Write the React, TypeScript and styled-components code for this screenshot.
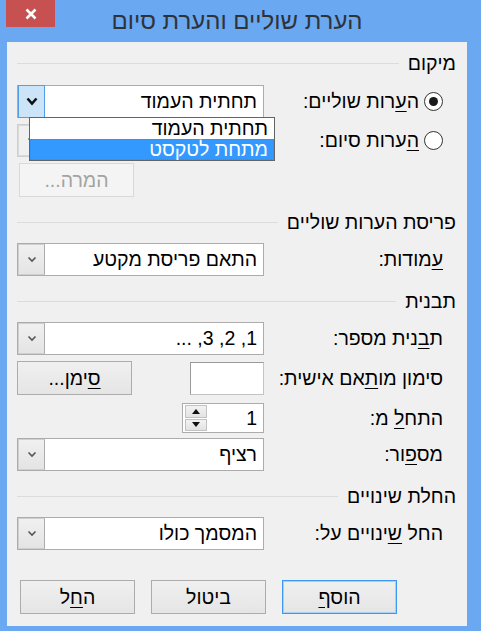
import React from "react";
import styled, { createGlobalStyle } from "styled-components";

const GlobalStyle = createGlobalStyle`
  html, body {
    margin: 0;
    padding: 0;
    background: #6aa8f1;
  }
  body {
    font-family: "Liberation Sans", "DejaVu Sans", sans-serif;
  }
`;

const Window = styled.div`
  width: 481px;
  height: 631px;
  box-sizing: border-box;
  background: #6aa8f1;
  padding: 0 14px 5px 7px;
  display: flex;
  flex-direction: column;
`;

const TitleBar = styled.div`
  height: 42px;
  flex: none;
  display: grid;
  grid-template-columns: 49px 1fr 49px;
`;

const CloseButton = styled.div`
  margin-left: -1px;
  width: 49px;
  height: 27px;
  background: #c75050;
  display: flex;
  align-items: center;
  justify-content: center;
`;

const Title = styled.div`
  direction: rtl;
  text-align: center;
  font-size: 24px;
  line-height: 42px;
  color: #2f3338;
  white-space: nowrap;
`;

const Client = styled.div`
  flex: 1;
  background: #f0f0f0;
  direction: rtl;
  padding: 11px 11px 0 10px;
  display: flex;
  flex-direction: column;
  font-size: 19.5px;
  color: #000;
`;

const SectionHeader = styled.div<{ $mt?: number }>`
  display: flex;
  align-items: center;
  gap: 9px;
  height: 20px;
  margin-top: ${(p) => p.$mt ?? 0}px;
  white-space: nowrap;
  &::after {
    content: "";
    flex: 1;
    height: 1px;
    background: #dcdcdc;
  }
`;

const Row = styled.div<{ $mt: number }>`
  display: flex;
  align-items: center;
  justify-content: space-between;
  margin-top: ${(p) => p.$mt}px;
`;

const Label = styled.div`
  padding-right: 13px;
  display: flex;
  align-items: center;
  gap: 5px;
  white-space: nowrap;
`;

const U = styled.span`
  text-decoration: underline;
  text-underline-offset: 3px;
`;

const RadioCircle = styled.span<{ $checked?: boolean }>`
  width: 19px;
  height: 19px;
  box-sizing: border-box;
  border-radius: 50%;
  border: 1px solid #333;
  background: #fff;
  display: flex;
  align-items: center;
  justify-content: center;
  &::after {
    content: "";
    width: 9px;
    height: 9px;
    border-radius: 50%;
    background: ${(p) => (p.$checked ? "#1a1a1a" : "transparent")};
  }
`;

const Combo = styled.div<{ $disabled?: boolean }>`
  position: relative;
  width: 247px;
  height: 33px;
  box-sizing: border-box;
  border: 1px solid ${(p) => (p.$disabled ? "#cfcfcf" : "#acacac")};
  background: ${(p) => (p.$disabled ? "#f0f0f0" : "#fff")};
  display: flex;
  align-items: center;
`;

const ComboText = styled.div<{ $disabled?: boolean }>`
  flex: 1;
  padding-right: 6px;
  white-space: nowrap;
  color: ${(p) => (p.$disabled ? "#9a9a9a" : "#000")};
`;

const ComboButton = styled.div<{ $open?: boolean; $disabled?: boolean }>`
  width: 27px;
  align-self: stretch;
  box-sizing: border-box;
  display: flex;
  align-items: center;
  justify-content: center;
  background: ${(p) =>
    p.$open ? "#cce4f7" : p.$disabled ? "#f0f0f0" : "linear-gradient(#f0f0f0, #e4e4e4)"};
  border: 1px solid ${(p) => (p.$open ? "#569de5" : p.$disabled ? "#d9d9d9" : "#cfcfcf")};
  margin: ${(p) => (p.$open ? "-1px -1px -1px 0" : "0")};
  border-right-color: ${(p) => (p.$open ? "#569de5" : p.$disabled ? "#d9d9d9" : "#acacac")};
`;

const Popup = styled.div`
  position: absolute;
  top: 100%;
  left: 11px;
  width: 246px;
  box-sizing: border-box;
  border: 1px solid #646464;
  background: #fff;
  z-index: 5;
`;

const PopupItem = styled.div<{ $selected?: boolean }>`
  height: 21px;
  line-height: 19px;
  box-sizing: border-box;
  padding-right: 5px;
  white-space: nowrap;
  background: ${(p) => (p.$selected ? "#3399ff" : "#fff")};
  color: ${(p) => (p.$selected ? "#fff" : "#000")};
  border: 1px dotted ${(p) => (p.$selected ? "#c46a1e" : "transparent")};
`;

const Button = styled.div<{ $disabled?: boolean; $default?: boolean }>`
  width: 115px;
  height: 34px;
  box-sizing: border-box;
  display: flex;
  align-items: center;
  justify-content: center;
  background: ${(p) => (p.$disabled ? "#f4f4f4" : "linear-gradient(#f0f0f0, #e5e5e5)")};
  border: 1px solid
    ${(p) => (p.$disabled ? "#d9d9d9" : p.$default ? "#3c99f1" : "#acacac")};
  box-shadow: ${(p) => (p.$default ? "inset 0 0 0 1px #a9d1f7" : "none")};
  color: ${(p) => (p.$disabled ? "#a3a3a3" : "#000")};
  white-space: nowrap;
`;

const ControlArea = styled.div`
  width: 247px;
  display: flex;
  align-items: center;
  justify-content: space-between;
`;

const TextBox = styled.div`
  width: 74px;
  height: 33px;
  box-sizing: border-box;
  border: 1px solid #9a9a9a;
  border-right-color: #c4c4c4;
  border-bottom-color: #c4c4c4;
  background: #fff;
`;

const Spinner = styled.div`
  width: 82px;
  height: 30px;
  box-sizing: border-box;
  border: 1px solid #acacac;
  background: #fff;
  display: flex;
  align-items: center;
`;

const SpinValue = styled.div`
  flex: 1;
  padding-right: 6px;
`;

const SpinButtons = styled.div`
  width: 22px;
  margin-left: 2px;
  align-self: stretch;
  display: flex;
  flex-direction: column;
  padding: 1px 0;
  gap: 1px;
`;

const SpinHalf = styled.div`
  flex: 1;
  background: linear-gradient(#f2f2f2, #e3e3e3);
  border: 1px solid #c2c2c2;
  display: flex;
  align-items: center;
  justify-content: center;
`;

const ButtonBar = styled.div`
  margin-top: 30px;
  padding-right: 59px;
  display: flex;
  gap: 16px;
`;

const ConvertRow = styled.div`
  margin-top: 6px;
  display: flex;
  justify-content: flex-end;
  padding-left: 2px;
`;

const Chevron = ({ bold }: { bold?: boolean }) =>
  bold ? (
    <svg width="12" height="9" viewBox="0 0 12 9">
      <polyline points="1.5,1.5 6,6.5 10.5,1.5" fill="none" stroke="#111" strokeWidth="2.6" />
    </svg>
  ) : (
    <svg width="10" height="7" viewBox="0 0 10 7">
      <polyline points="1.5,1.5 5,5 8.5,1.5" fill="none" stroke="#555" strokeWidth="1.6" />
    </svg>
  );

const Select = ({
  value,
  open,
  disabled,
  children,
}: {
  value: string;
  open?: boolean;
  disabled?: boolean;
  children?: React.ReactNode;
}) => (
  <Combo $disabled={disabled}>
    <ComboText $disabled={disabled}>{value}</ComboText>
    <ComboButton $open={open} $disabled={disabled}>
      <Chevron bold={open} />
    </ComboButton>
    {children}
  </Combo>
);

export default function App() {
  return (
    <Window>
      <GlobalStyle />
      <TitleBar>
        <CloseButton>
          <svg width="12" height="12" viewBox="0 0 12 12">
            <path d="M1.5 1.5 L10.5 10.5 M10.5 1.5 L1.5 10.5" stroke="#fff" strokeWidth="2.6" />
          </svg>
        </CloseButton>
        <Title>הערת שוליים והערת סיום</Title>
        <div />
      </TitleBar>
      <Client>
        <SectionHeader>מיקום</SectionHeader>
        <Row $mt={12}>
          <Label>
            <RadioCircle $checked />
            <span>
              ה<U>ע</U>רות שוליים:
            </span>
          </Label>
          <Select value="תחתית העמוד" open>
            <Popup>
              <PopupItem>תחתית העמוד</PopupItem>
              <PopupItem $selected>מתחת לטקסט</PopupItem>
            </Popup>
          </Select>
        </Row>
        <Row $mt={6}>
          <Label>
            <RadioCircle />
            <span>
              <U>ה</U>ערות סיום:
            </span>
          </Label>
          <Select value="" disabled />
        </Row>
        <ConvertRow>
          <Button $disabled>המרה...</Button>
        </ConvertRow>

        <SectionHeader $mt={15}>פריסת הערות שוליים</SectionHeader>
        <Row $mt={11}>
          <Label>
            <span>
              <U>ע</U>מודות:
            </span>
          </Label>
          <Select value="התאם פריסת מקטע" />
        </Row>

        <SectionHeader $mt={15}>תבנית</SectionHeader>
        <Row $mt={11}>
          <Label>
            <span>
              ת<U>ב</U>נית מספר:
            </span>
          </Label>
          <Select value="1, 2, 3, ..." />
        </Row>
        <Row $mt={6}>
          <Label>
            <span>
              סימון מו<U>ת</U>אם אישית:
            </span>
          </Label>
          <ControlArea>
            <TextBox />
            <Button>
              <span>
                <U>ס</U>ימן...
              </span>
            </Button>
          </ControlArea>
        </Row>
        <Row $mt={8}>
          <Label>
            <span>
              התח<U>ל</U> מ:
            </span>
          </Label>
          <ControlArea>
            <Spinner>
              <SpinValue>1</SpinValue>
              <SpinButtons>
                <SpinHalf>
                  <svg width="8" height="5" viewBox="0 0 8 5">
                    <polygon points="0,5 4,0 8,5" fill="#111" />
                  </svg>
                </SpinHalf>
                <SpinHalf>
                  <svg width="8" height="5" viewBox="0 0 8 5">
                    <polygon points="0,0 8,0 4,5" fill="#111" />
                  </svg>
                </SpinHalf>
              </SpinButtons>
            </Spinner>
          </ControlArea>
        </Row>
        <Row $mt={5}>
          <Label>
            <span>
              מס<U>פ</U>ור:
            </span>
          </Label>
          <Select value="רציף" />
        </Row>

        <SectionHeader $mt={15}>החלת שינויים</SectionHeader>
        <Row $mt={11}>
          <Label>
            <span>
              החל <U>ש</U>ינויים על:
            </span>
          </Label>
          <Select value="המסמך כולו" />
        </Row>

        <ButtonBar>
          <Button $default>
            <span>
              הוס<U>ף</U>
            </span>
          </Button>
          <Button>ביטול</Button>
          <Button>
            <span>
              ה<U>ח</U>ל
            </span>
          </Button>
        </ButtonBar>
      </Client>
    </Window>
  );
}
